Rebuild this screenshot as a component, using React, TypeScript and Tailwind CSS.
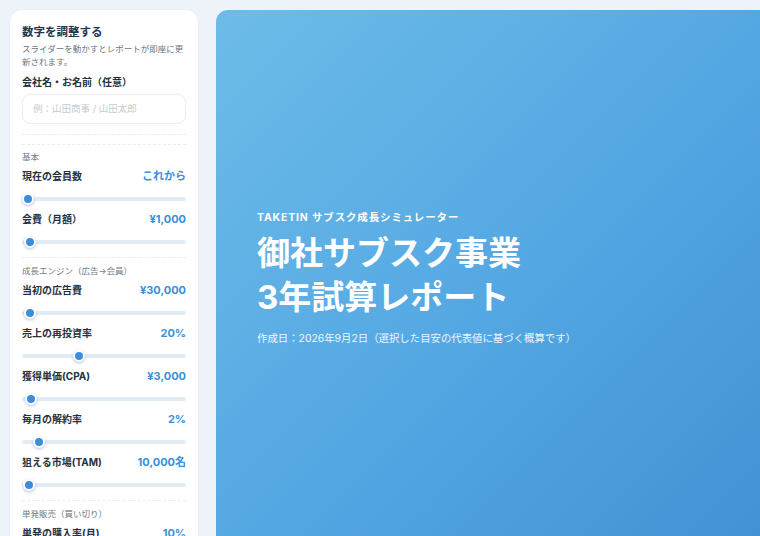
const font = { fontFamily: '"Inter", "Noto Sans CJK JP", sans-serif' };

type Row = { label: string; value: string; pos: number };

const sections: { title: string; rows: Row[] }[] = [
  {
    title: '基本',
    rows: [
      { label: '現在の会員数', value: 'これから', pos: 0 },
      { label: '会費（月額）', value: '¥1,000', pos: 1.5 },
    ],
  },
  {
    title: '成長エンジン（広告→会員）',
    rows: [
      { label: '当初の広告費', value: '¥30,000', pos: 1.5 },
      { label: '売上の再投資率', value: '20%', pos: 31 },
      { label: '獲得単価(CPA)', value: '¥3,000', pos: 2 },
      { label: '毎月の解約率', value: '2%', pos: 7 },
      { label: '狙える市場(TAM)', value: '10,000名', pos: 0.5 },
    ],
  },
  {
    title: '単発販売（買い切り）',
    rows: [{ label: '単発の購入率(月)', value: '10%', pos: 10 }],
  },
];

function Slider({ pos }: { pos: number }) {
  return (
    <div className="relative mt-[7px] h-[18px] flex items-center">
      <div className="h-[4px] w-full rounded-full bg-[#e2ecf4]" />
      <div
        className="absolute top-1/2 -translate-y-1/2 w-[12px] h-[12px] rounded-full bg-[#3c8edb] border-2 border-white shadow-[0_1px_3px_rgba(30,80,140,0.35)]"
        style={{ left: `${pos}%` }}
      />
    </div>
  );
}

function SliderRow({ row, first }: { row: Row; first: boolean }) {
  return (
    <div className={first ? 'mt-[6px]' : 'mt-[4px]'}>
      <div className="flex h-[14px] items-center justify-between">
        <span className="text-[10px] font-bold text-[#27313d]">{row.label}</span>
        <span className="text-[11px] font-bold text-[#3a8fd8]">{row.value}</span>
      </div>
      <Slider pos={row.pos} />
    </div>
  );
}

export default function App() {
  return (
    <div className="w-[760px] h-[536px] overflow-hidden bg-[#edf3f9]" style={font}>
      <div className="flex gap-[18px] pt-[10px] pl-[10px]">
        <aside className="w-[188px] shrink-0 h-[600px] rounded-xl bg-white px-[12px] pt-[14px] shadow-[0_1px_3px_rgba(40,80,130,0.06)]">
          <h2 className="text-[11.5px] font-bold text-[#1f3550] leading-[16px]">数字を調整する</h2>
          <p className="mt-[3px] text-[8.5px] leading-[13px] text-[#6b7683]">
            スライダーを動かすとレポートが即座に更新されます。
          </p>
          <div className="pb-[10px] border-b border-dashed border-[#e6edf3]">
            <label className="mt-[6px] block text-[10px] font-bold text-[#27313d]">会社名・お名前（任意）</label>
            <div className="mt-[4px] h-[30px] rounded-lg border border-[#e8eef4] px-[10px] flex items-center text-[9.5px] text-[#c4cbd3]">
              例：山田商事 / 山田太郎
            </div>
          </div>
          {sections.map((s, i) => (
            <section
              key={s.title}
              className={
                i === 0
                  ? 'mt-[9px] pt-[6px] pb-[6px] border-t border-dashed border-[#e6edf3]'
                  : 'pt-[7px] pb-[6px] border-t border-dashed border-[#e6edf3]'
              }
            >
              <h3 className="text-[8.5px] text-[#707b88] leading-[12px]">{s.title}</h3>
              {s.rows.map((r, j) => (
                <SliderRow key={r.label} row={r} first={j === 0} />
              ))}
            </section>
          ))}
        </aside>

        <main className="w-[600px] shrink-0 h-[600px] rounded-xl bg-linear-to-br from-[#6dbce8] via-[#52a6e2] to-[#3e8cd2] pl-[41px] pt-[200px] text-white">
          <p className="text-[10.5px] font-bold tracking-[0.08em]">TAKETIN サブスク成長シミュレーター</p>
          <h1 className="mt-[5px] text-[33px] font-bold leading-[44px]">
            御社サブスク事業
            <br />
            3年試算レポート
          </h1>
          <p className="mt-[12px] text-[10.4px] text-white/90">
            作成日：2026年9月2日（選択した目安の代表値に基づく概算です）
          </p>
        </main>
      </div>
    </div>
  );
}
